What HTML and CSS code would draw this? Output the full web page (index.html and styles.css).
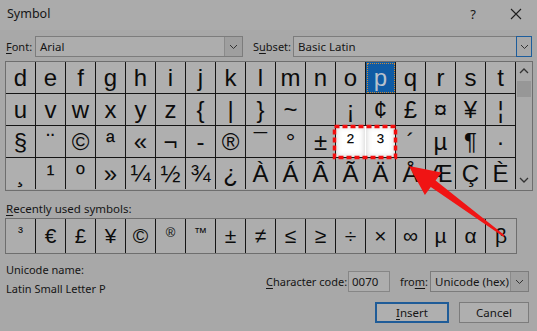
FILE: index.html
```html
<!DOCTYPE html>
<html lang="en">
<head>
    <meta charset="UTF-8">
    <meta name="viewport" content="width=device-width, initial-scale=1.0">
    <title>Symbol</title>
    <link rel="stylesheet" href="styles.css">
</head>
<body>
    <div class="dialog">
        <div class="titlebar">
            <span class="title">Symbol</span>
            <span class="help">?</span>
            <svg class="close" width="12" height="12" viewBox="0 0 12 12">
                <path d="M1 1 L11 11 M11 1 L1 11" stroke="#1e1e1e" stroke-width="1.1" fill="none"/>
            </svg>
        </div>

        <div class="font-row">
            <span class="lbl lbl-font"><u>F</u>ont:</span>
            <div class="combo combo-font">
                <span class="combo-text">Arial</span>
                <span class="combo-arrow">
                    <svg width="9" height="6" viewBox="0 0 9 6"><path d="M1 1 L4.5 4.5 L8 1" stroke="#333" fill="none"/></svg>
                </span>
            </div>
            <span class="lbl lbl-subset">S<u>u</u>bset:</span>
            <div class="combo combo-subset">
                <span class="combo-text">Basic Latin</span>
                <span class="combo-arrow focus">
                    <svg width="9" height="6" viewBox="0 0 9 6"><path d="M1 1 L4.5 4.5 L8 1" stroke="#333" fill="none"/></svg>
                </span>
            </div>
        </div>

        <div class="grid-box">
            <div class="grid">
                <span>d</span><span>e</span><span>f</span><span>g</span><span>h</span><span>i</span><span>j</span><span>k</span><span>l</span><span>m</span><span>n</span><span>o</span><span class="selected">p</span><span>q</span><span>r</span><span>s</span><span>t</span>
                <span>u</span><span>v</span><span>w</span><span>x</span><span>y</span><span>z</span><span>{</span><span>|</span><span>}</span><span>~</span><span></span><span>¡</span><span>¢</span><span>£</span><span>¤</span><span>¥</span><span>¦</span>
                <span>§</span><span>¨</span><span>©</span><span>ª</span><span>«</span><span>¬</span><span>-</span><span>®</span><span>¯</span><span>°</span><span>±</span><span class="glow glow-left">²</span><span class="glow">³</span><span>´</span><span>µ</span><span>¶</span><span>·</span>
                <span class="last">¸</span><span class="last">¹</span><span class="last">º</span><span class="last">»</span><span class="last">¼</span><span class="last">½</span><span class="last">¾</span><span class="last">¿</span><span class="last">À</span><span class="last">Á</span><span class="last">Â</span><span class="last">Ã</span><span class="last">Ä</span><span class="last">Å</span><span class="last">Æ</span><span class="last">Ç</span><span class="last">È</span>
            </div>
            <div class="scrollbar">
                <svg class="scroll-up" width="10" height="6" viewBox="0 0 10 6"><path d="M1 5 L5 1 L9 5" stroke="#333" stroke-width="1.3" fill="none"/></svg>
                <div class="thumb"></div>
                <svg class="scroll-down" width="10" height="6" viewBox="0 0 10 6"><path d="M1 1 L5 5 L9 1" stroke="#333" stroke-width="1.3" fill="none"/></svg>
            </div>
        </div>

        <div class="recent-label"><u>R</u>ecently used symbols:</div>
        <div class="recent">
            <span class="sup">³</span><span>€</span><span>£</span><span>¥</span><span>©</span><span class="sup small">®</span><span class="sup small">™</span><span>±</span><span>≠</span><span>≤</span><span>≥</span><span>÷</span><span>×</span><span>∞</span><span>µ</span><span>α</span><span>β</span>
        </div>

        <div class="bottom">
            <div class="uname">
                <div class="line">Unicode name:</div>
                <div class="line">Latin Small Letter P</div>
            </div>
            <div class="controls">
                <div class="code-row">
                    <span class="lbl lbl-code"><u>C</u>haracter code:</span>
                    <div class="code-input">0070</div>
                    <span class="lbl lbl-from">fro<u>m</u>:</span>
                    <div class="combo combo-from">
                        <span class="combo-text">Unicode (hex)</span>
                        <span class="combo-arrow">
                            <svg width="9" height="6" viewBox="0 0 9 6"><path d="M1 1 L4.5 4.5 L8 1" stroke="#333" fill="none"/></svg>
                        </span>
                    </div>
                </div>
                <div class="buttons">
                    <div class="btn btn-default"><u>I</u>nsert</div>
                    <div class="btn">Cancel</div>
                </div>
            </div>
        </div>

        <!-- annotation drawn on top of the screenshot -->
        <svg class="overlay" width="537" height="331" viewBox="0 0 537 331">
            <rect x="334.5" y="126.5" width="61" height="31" fill="none" stroke="#f20d0d" stroke-width="3.5" stroke-dasharray="5 3"/>
            <polygon points="409,166 441.5,172.5 435.6,180.6 504.6,235.2 503.4,236.8 430.8,187 424.9,195.1" fill="#f01414"/>
        </svg>
    </div>
</body>
</html>
```

FILE: styles.css
```css
* {
    box-sizing: border-box;
}
body {
    margin: 0;
    background-color: #a8a8a8;
    font-family: 'Noto Sans', sans-serif;
    font-size: 11px;
    color: #151515;
}
u {
    text-decoration-thickness: 1px;
    text-underline-offset: 2px;
}
.dialog {
    position: relative;
    width: 537px;
    height: 331px;
    overflow: hidden;
}
.titlebar {
    height: 30px;
    display: flex;
    align-items: center;
    padding: 0 15px 3px 7px;
    background-color: #ababab;
}
.title {
    flex: 1;
    font-size: 12.5px;
}
.help {
    font-size: 13px;
    margin-right: 34px;
}
.font-row {
    display: flex;
    align-items: center;
    height: 21px;
    margin-top: 6px;
    padding-left: 6px;
}
.lbl {
    white-space: nowrap;
    flex: none;
}
.lbl-font {
    width: 29px;
}
.lbl-subset {
    width: 40px;
    margin-left: 10px;
}
.combo {
    display: flex;
    height: 21px;
    border: 1px solid #7c7c7c;
    background-color: #adadad;
}
.combo-text {
    flex: 1;
    padding-left: 4px;
    line-height: 19px;
    font-size: 11.5px;
}
.combo-arrow {
    width: 18px;
    display: flex;
    align-items: center;
    justify-content: center;
    background-color: #9f9f9f;
    border-left: 1px solid #8a8a8a;
}
.combo-arrow.focus {
    width: 16px;
    border: 1px solid #1d5d9c;
    background-color: #a9a9a9;
    margin: -1px -1px -1px 0;
}
.combo-font {
    width: 208px;
}
.combo-subset {
    width: 239px;
}
.grid-box {
    display: flex;
    width: 528px;
    margin: 4px 0 0 5px;
    border: 1px solid #6e6e6e;
}
.grid {
    display: grid;
    grid-template-columns: repeat(17, 30px);
    grid-auto-rows: 32px;
    font-family: 'Liberation Sans', Arial, sans-serif;
    font-size: 24px;
    color: #0c0c0c;
}
.grid span {
    display: flex;
    align-items: center;
    justify-content: center;
    border-right: 1px solid #151515;
    border-bottom: 1px solid #151515;
    background-color: #afafaf;
}
.grid span.last {
    border-bottom: none;
    height: 31px;
}
.grid .selected {
    background-color: #0f5ba4;
    color: #b9c2cc;
    outline: 1px dotted #c98a3a;
    outline-offset: -2px;
}
.grid .glow {
    background-color: #ffffff;
    box-shadow: inset 0 0 5px 1px rgba(185, 185, 185, 0.6);
    font-size: 22px;
}
.grid .glow-left {
    border-right-color: #ffffff;
}
.scrollbar {
    width: 16px;
    display: flex;
    flex-direction: column;
    align-items: center;
    background-color: #aaaaaa;
}
.scroll-up {
    margin-top: 6px;
}
.thumb {
    width: 14px;
    height: 16px;
    margin-top: 7px;
    background-color: #979797;
}
.scroll-down {
    margin-top: auto;
    margin-bottom: 7px;
}
.recent-label {
    margin: 9px 0 0 6px;
    line-height: 18px;
    font-size: 11.5px;
}
.recent {
    display: grid;
    grid-template-columns: repeat(17, 30px);
    width: 512px;
    height: 36px;
    margin-left: 5px;
    border: 1px solid #6e6e6e;
    font-family: 'Liberation Sans', Arial, sans-serif;
    font-size: 21px;
    color: #0c0c0c;
}
.recent span {
    display: flex;
    align-items: center;
    justify-content: center;
    border-right: 1px solid #151515;
    background-color: #adadad;
}
.recent span:last-child {
    border-right: none;
}
.recent .sup {
    align-items: flex-start;
    padding-top: 4px;
    font-size: 15px;
}
.recent .small {
    font-size: 13px;
    padding-top: 6px;
}
.bottom {
    display: flex;
    margin-top: 7px;
    padding: 0 8px 0 6px;
}
.uname {
    flex: 1;
}
.uname .line {
    line-height: 18px;
    margin-bottom: 1px;
}
.controls {
    width: 263px;
}
.code-row {
    display: flex;
    align-items: center;
    margin-top: 10px;
}
.lbl-code {
    width: 82px;
}
.code-input {
    width: 42px;
    height: 21px;
    line-height: 19px;
    padding-left: 3px;
    border: 1px solid #868686;
    background-color: #adadad;
    font-size: 11.5px;
}
.lbl-from {
    width: 30px;
    margin-left: 10px;
}
.combo-from {
    width: 99px;
}
.buttons {
    display: flex;
    justify-content: flex-end;
    gap: 10px;
    margin-top: 10px;
}
.btn {
    width: 70px;
    height: 21px;
    line-height: 19px;
    text-align: center;
    border: 1px solid #7c7c7c;
    background-color: #afafaf;
    font-size: 11.5px;
}
.btn-default {
    width: 74px;
    border: 2px solid #1f5c98;
    line-height: 17px;
}
.overlay {
    position: absolute;
    left: 0;
    top: 0;
    pointer-events: none;
}
```
